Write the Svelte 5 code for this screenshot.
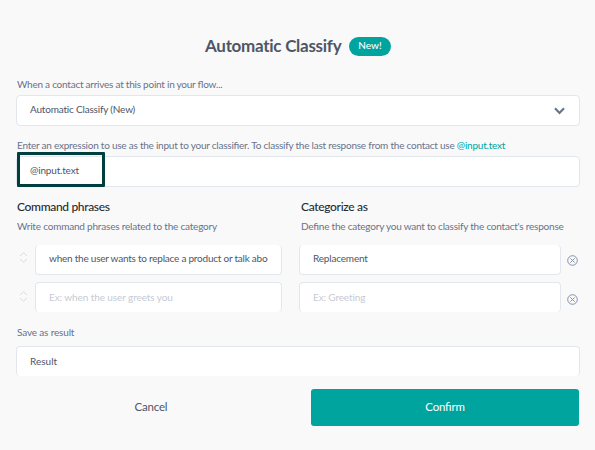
<script>
  const rows = [
    { phrase: 'when the user wants to replace a product or talk abo', category: 'Replacement', filled: true },
    { phrase: 'Ex: when the user greets you', category: 'Ex: Greeting', filled: false }
  ];
</script>

<main class="dialog">
  <header><h1>Automatic Classify</h1><span class="badge"><span>New!</span></span></header>

  <div class="label first"><span class="l1">When a contact arrives at this point in your flow...</span></div>
  <div class="field select">
    <span class="v1">Automatic Classify (New)</span>
    <svg width="11" height="8" viewBox="0 0 11 8"><path d="M1 1.2 5.5 6 10 1.2" fill="none" stroke="#67738b" stroke-width="2.1" /></svg>
  </div>

  <div class="label second"><span class="l2">Enter an expression to use as the input to your classifier. To classify the last response from the contact use <a>@input.text</a></span></div>
  <div class="field expression"><span class="v2">@input.text</span><i class="highlight"></i></div>

  <section class="headings">
    <div class="left"><h2>Command phrases</h2><p class="p1">Write command phrases related to the category</p></div>
    <div><h2>Categorize as</h2><p class="p2">Define the category you want to classify the contact's response</p></div>
  </section>

  <section class="rules">
    {#each rows as row}
      <div class="row" class:empty={!row.filled}>
        <svg class="sort" width="9" height="11" viewBox="0 0 9 11"><path d="M1 4 4.5.8 8 4M1 7l3.5 3.2L8 7" fill="none" stroke="#d9dbdf" /></svg>
        <div class="field phrase"><span>{row.phrase}</span></div>
        <div class="field category"><span>{row.category}</span></div>
        <svg class="remove" width="11" height="11" viewBox="0 0 11 11" fill="none" stroke="#8490ac"><circle cx="5.5" cy="5.5" r="4.8" /><path d="m3.4 3.4 4.2 4.2m0-4.2L3.4 7.6" /></svg>
      </div>
    {/each}
  </section>

  <div class="label save"><span class="l3">Save as result</span></div>
  <div class="field result"><span class="v3">Result</span></div>

  <footer><button class="cancel">Cancel</button><button class="confirm">Confirm</button></footer>
</main>

<style>
  :global(body) { margin: 0; background: #f9f9f9; }
  * { box-sizing: border-box; }
  .dialog { width: 595px; height: 450px; padding: 35px 15px 0 16px; background: #f9f9f9; font: 10px/14px Lato, sans-serif; font-feature-settings: "liga" 1; color: #4e5666; overflow: hidden; white-space: nowrap; }
  header { display: flex; height: 21px; align-items: center; padding-left: 189px; }
  h1 { margin: 0; width: 144px; font-size: 17px; line-height: 20px; font-weight: 700; color: #4e5666; letter-spacing: -.28px; }
  h1, .v1, .row .category { font-feature-settings: "liga" 0; }
  .badge { width: 42px; height: 19px; margin-top: 2px; border-radius: 10px; background: #00a49f; color: #fff; text-align: center; line-height: 17px; font-size: 10px; font-weight: 500; }
  .label { display: flex; align-items: center; height: 14px; padding-left: 1px; color: #67738b; }
  .first { margin: 21px 0 4px; }
  .field { display: flex; align-items: center; position: relative; width: 564px; height: 31px; padding: 0 14px 4px 13px; border: 1px solid #e2e6ed; border-radius: 4px; background: #fff; }
  .select { justify-content: space-between; }
  .select svg { position: relative; top: 2px; }
  .second { margin: 12px 0 4px; }
  a { color: #00a49f; }
  .l1 { letter-spacing: -.24px; }
  .l2 { letter-spacing: -.233px; }
  .l3 { letter-spacing: -.16px; }
  .v1 { letter-spacing: -.19px; }
  .v2 { letter-spacing: -.18px; }
  .p1 { letter-spacing: -.2px; }
  .p2 { letter-spacing: -.22px; }
  .highlight { position: absolute; left: 0; top: -5px; width: 88px; height: 35px; border: 3px solid #003f40; border-radius: 1px; }
  .headings { display: flex; margin-top: 12px; padding-left: 1px; }
  .left { width: 284px; }
  h2 { margin: 0; font-size: 12px; line-height: 15px; font-weight: 500; color: #272b33; letter-spacing: -.33px; }
  p { margin: 5px 0 0; line-height: 14px; color: #67738b; }
  .rules { margin-top: 12px; }
  .row { display: flex; align-items: center; height: 30px; padding-left: 3px; }
  .row .field { height: 30px; border-top: 0; padding-bottom: 3px; letter-spacing: -.23px; }
  .row.empty { margin-top: 7px; height: 30px; }
  .row.empty .field { border-top: 1px solid #e2e6ed; border-bottom: 0; padding-bottom: 1px; color: #c6cad5; letter-spacing: -.09px; }
  .sort { margin-right: 7px; position: relative; top: -3px; }
  .row.empty .sort { top: -1px; }
  .row .phrase { width: 247px; }
  .row .category { width: 262px; margin-left: 17px; }
  .row:not(.empty) .category { letter-spacing: -.18px; }
  .row.empty .category { letter-spacing: -.13px; }
  .remove { margin-left: 6px; }
  .row.empty .remove { position: relative; top: 2px; }
  .save { margin: 13px 0 7px; }
  .result { height: 30px; border-bottom: 0; padding-bottom: 2px; }
  footer { display: flex; margin-top: 13px; }
  button { padding: 0 0 2px; border: 0; font: 11.5px/16px Lato, sans-serif; letter-spacing: -.2px; font-feature-settings: "liga" 1; height: 37px; }
  .cancel { width: 270px; margin-right: 25px; background: none; color: #4e5666; }
  .confirm { width: 268px; border-radius: 3px; background: #00a49f; color: #fff; }
</style>
